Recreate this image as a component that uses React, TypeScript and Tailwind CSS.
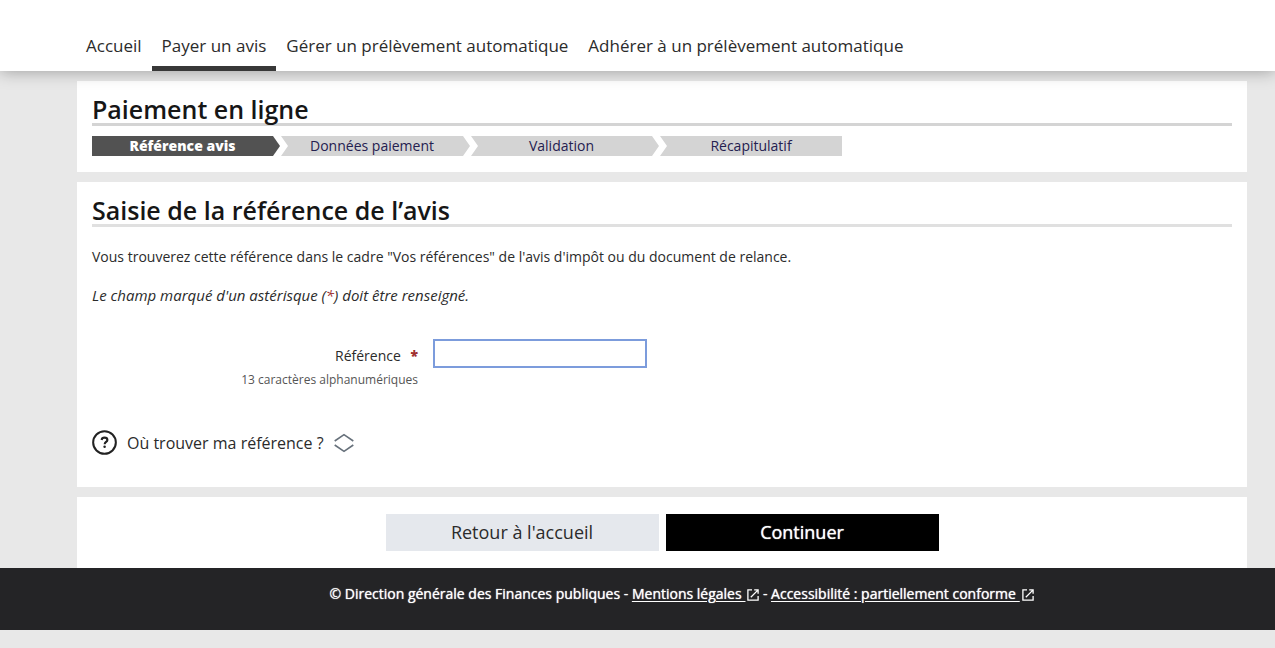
import React from "react";

const navItems = [
  { label: "Accueil", active: false },
  { label: "Payer un avis", active: true },
  { label: "Gérer un prélèvement automatique", active: false },
  { label: "Adhérer à un prélèvement automatique", active: false },
];

const first = "[clip-path:polygon(0_0,calc(100%-7px)_0,100%_50%,calc(100%-7px)_100%,0_100%)]";
const middle = "[clip-path:polygon(0_0,calc(100%-7px)_0,100%_50%,calc(100%-7px)_100%,0_100%,7px_50%)]";
const last = "[clip-path:polygon(0_0,100%_0,100%_100%,0_100%,7px_50%)]";

const steps = [
  { label: "Référence avis", style: `${first} bg-[#525252] pr-[7px] font-extrabold text-white` },
  { label: "Données paiement", style: `${middle} bg-[#d4d4d4] pr-[7px] text-[#242050]` },
  { label: "Validation", style: `${middle} bg-[#d4d4d4] pr-[7px] text-[#242050]` },
  { label: "Récapitulatif", style: `${last} bg-[#d4d4d4] text-[#242050]` },
];

function ExternalIcon() {
  return (
    <svg viewBox="0 0 12 12" className="ml-0.5 inline-block size-3 align-[-2px]" fill="none" stroke="currentColor" strokeWidth="1.3" aria-hidden="true">
      <path d="M5 0.9H0.9v10.2h10.2V7" />
      <path d="M7.2 0.9h3.9v3.9M10.9 1.1L3.8 8.2" />
    </svg>
  );
}

export default function App() {
  return (
    <div className="min-h-screen bg-[#e8e8e8] font-['Open_Sans',sans-serif] text-[#2b2b2b]">
      <header className="relative bg-white shadow-[0_0_16px_rgba(0,0,0,0.35)]">
        <nav className="pt-7 pl-[76px]" aria-label="Navigation principale">
          <ul className="flex text-[17px] leading-9">
            {navItems.map((item) => (
              <li key={item.label}>
                <a
                  href="#"
                  aria-current={item.active ? "page" : undefined}
                  className={`block border-b-5 px-2.5 pb-0.5 ${item.active ? "border-[#383838]" : "border-transparent"}`}
                >
                  {item.label}
                </a>
              </li>
            ))}
          </ul>
        </nav>
      </header>

      <main className="flex flex-col gap-2.5 pt-2.5 pr-7 pl-[77px]">
        <section className="bg-white px-[15px] pt-3 pb-4">
          <h1 className="border-b-3 border-[#d4d4d4] pt-0.5 text-[25px] leading-7 font-semibold text-[#161616]">Paiement en ligne</h1>
          <ol className="mt-2.5 grid max-w-[750px] grid-cols-[188fr_189fr_188fr_182fr] gap-px text-center text-sm leading-5">
            {steps.map((step) => (
              <li key={step.label} className={step.style}>{step.label}</li>
            ))}
          </ol>
        </section>

        <section className="bg-white px-[15px] pt-3 pb-8">
          <h2 className="border-b-3 border-[#e0e0e0] pt-0.5 text-[25px] leading-7 font-semibold text-[#161616]">Saisie de la référence de l’avis</h2>
          <p className="mt-5 text-sm leading-5">
            Vous trouverez cette référence dans le cadre "Vos références" de l'avis d'impôt ou du document de relance.
          </p>
          <p className="mt-[18px] text-[15px] leading-5 italic">
            Le champ marqué d'un astérisque (<span className="text-[#a03030]">*</span>) doit être renseigné.
          </p>
          <div className="mt-[34px] grid grid-cols-[341fr_799fr] items-start">
            <div className="pt-[7px] pr-[15px] text-right">
              <label htmlFor="reference" className="block text-sm leading-5">
                Référence <span className="ml-1.5 font-extrabold text-[#a03030]">*</span>
              </label>
              <p id="reference-hint" className="mt-1 text-xs leading-5 text-[#555]">13 caractères alphanumériques</p>
            </div>
            <input
              id="reference"
              type="text"
              aria-describedby="reference-hint"
              className="h-[29px] w-[214px] border-2 border-[#7c9cdc] bg-white px-2 text-sm outline-none"
            />
          </div>
          <button type="button" className="mt-10 flex items-center text-base leading-6">
            <svg viewBox="0 0 26 26" className="mr-2.5 size-[25px]" fill="none" stroke="#222" aria-hidden="true">
              <circle cx="13" cy="13" r="11.8" strokeWidth="2.1" />
              <path d="M10 10.4c.2-1.5 1.3-2.5 3-2.5s3 .9 3 2.4c0 2-2.8 2.2-2.8 4.4" strokeWidth="2.2" />
              <circle cx="13.1" cy="17.5" r="1.3" fill="#222" stroke="none" />
            </svg>
            Où trouver ma référence ?
            <svg viewBox="0 0 20 20" className="ml-2.5 size-5" fill="none" stroke="#66707a" strokeWidth="1.6" aria-hidden="true">
              <path d="M.7 8L10 1.6 19.3 8M.7 12L10 18.4 19.3 12" />
            </svg>
          </button>
        </section>

        <div className="flex justify-center gap-[7px] bg-white py-[17px] text-lg leading-[37px]">
          <button type="button" className="w-[273px] bg-[#e5e8ed]">Retour à l'accueil</button>
          <button type="button" className="w-[273px] bg-black text-white [text-shadow:0_0_1px_currentColor]">Continuer</button>
        </div>
      </main>

      <footer className="bg-[#242426] pt-4 pb-[26px] pl-[88px] text-center text-sm leading-5 text-white [text-shadow:0_0_1px_currentColor]">
        © Direction générale des Finances publiques -{" "}
        <a href="#"><span className="underline underline-offset-2">Mentions légales&nbsp;</span><ExternalIcon /></a>
        {" "}-{" "}
        <a href="#"><span className="underline underline-offset-2">Accessibilité : partiellement conforme&nbsp;</span><ExternalIcon /></a>
      </footer>
    </div>
  );
}
